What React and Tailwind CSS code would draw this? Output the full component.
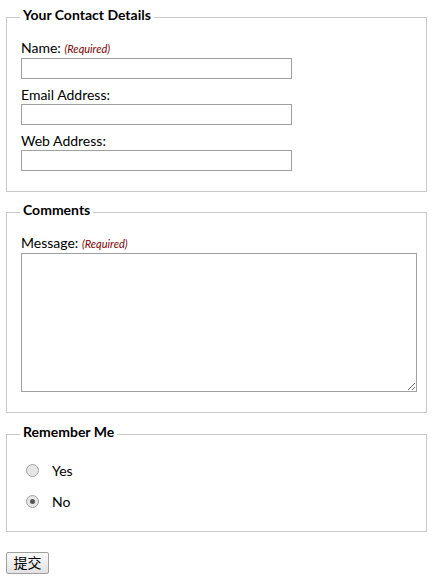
import React from 'react';

const font = { fontFamily: 'Lato, "Noto Sans CJK SC", sans-serif' };

function Field({ label, required, children }) {
  return (
    <div className="mb-[7px]">
      <label className="block text-[14px] leading-[18px] text-black">
        {label}{' '}
        {required && <em className="text-[11px] text-[#800000]">(Required)</em>}
      </label>
      {children}
    </div>
  );
}

function Radio({ checked, label }) {
  return (
    <label className="flex items-center h-[31px]">
      <span className="w-[13px] h-[13px] rounded-full border border-[#a0a0a0] bg-[#e6e6e6] flex items-center justify-center ml-[5px]">
        {checked && <span className="w-[5px] h-[5px] rounded-full bg-[#555]" />}
      </span>
      <span className="ml-[13px] text-[14px] text-black">{label}</span>
    </label>
  );
}

export default function App() {
  return (
    <div className="bg-white min-h-screen pt-[6px] px-[6px]" style={font}>
      <fieldset className="border border-[#c8c8c8] pl-[14px] pr-[14px] pb-[13px] pt-[11px] w-[421px]">
        <legend className="px-[3px] pb-[4px] -ml-px text-[14px] leading-[18px] font-bold text-black">Your Contact Details</legend>
        <Field label="Name:" required>
          <input className="block w-[271px] h-[21px] border border-[#a0a0a0]" />
        </Field>
        <Field label="Email Address:">
          <input className="block w-[271px] h-[21px] border border-[#a0a0a0]" />
        </Field>
        <Field label="Web Address:">
          <input className="block w-[271px] h-[21px] border border-[#a0a0a0]" />
        </Field>
      </fieldset>

      <fieldset className="mt-[9px] border border-[#c8c8c8] pl-[14px] pr-[9px] pb-[13px] pt-[11px] w-[421px]">
        <legend className="px-[3px] pb-[4px] -ml-px text-[14px] leading-[18px] font-bold text-black">Comments</legend>
        <Field label="Message:" required>
          <textarea className="block w-[396px] h-[139px] border border-[#a0a0a0] resize" />
        </Field>
      </fieldset>

      <fieldset className="mt-[10px] border border-[#c8c8c8] pl-[14px] pr-[14px] pb-[14px] pt-[10px] w-[421px]">
        <legend className="px-[3px] pb-[4px] -ml-px text-[14px] leading-[18px] font-bold text-black">Remember Me</legend>
        <Radio label="Yes" />
        <Radio label="No" checked />
      </fieldset>

      <button className="mt-[20px] h-[22px] w-[43px] border border-[#a0a0a0] rounded-[2px] bg-gradient-to-b from-[#fafafa] to-[#e2e2e2] text-[14px] leading-[20px] text-black">
        提交
      </button>
    </div>
  );
}
